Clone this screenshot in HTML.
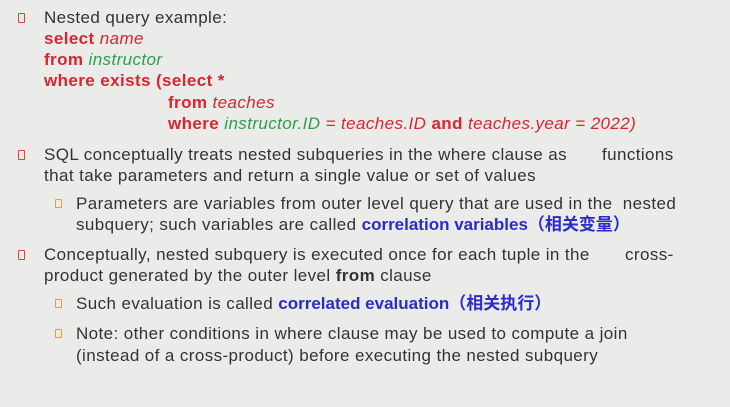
<!DOCTYPE html>
<html><head><meta charset="utf-8"><style>
body{margin:0;width:730px;height:407px;background:#ebebea;overflow:hidden;font-family:"Liberation Sans","Noto Sans CJK SC",sans-serif;font-size:17px;letter-spacing:0.4px;color:#333}
.l{position:absolute;white-space:nowrap;line-height:20px}
.r{color:#d9252f}.b{font-weight:bold}.i{font-style:italic}.g{color:#2f9e4c}.bl{color:#2b2bc8;font-weight:bold;letter-spacing:0}
.bu{position:absolute;width:5px;height:8px;border:1.5px solid #d9452f;border-radius:1px}
.sb{position:absolute;width:5px;height:7px;border:1.5px solid #e0a040;border-radius:1px}
</style></head><body>
<div class="bu" style="left:18px;top:13px"></div>
<div class="l" style="left:44px;top:8px">Nested query example:</div>
<div class="l r" style="left:44px;top:29px"><span class="b">select</span> <span class="i">name</span></div>
<div class="l r" style="left:44px;top:50px"><span class="b">from</span> <span class="i g">instructor</span></div>
<div class="l r b" style="left:44px;top:71px">where exists (select *</div>
<div class="l r" style="left:168px;top:93px"><span class="b">from</span> <span class="i">teaches</span></div>
<div class="l r" style="left:168px;top:114px"><span class="b">where</span> <span class="i g">instructor.ID</span><span class="i"> = teaches.ID </span><span class="b">and</span><span class="i"> teaches.year = 2022)</span></div>
<div class="bu" style="left:18px;top:150px"></div>
<div class="l" style="left:44px;top:145px">SQL conceptually treats nested subqueries in the where clause as</div>
<div class="l" style="left:602px;top:145px">functions</div>
<div class="l" style="left:44px;top:166px">that take parameters and return a single value or set of values</div>
<div class="sb" style="left:55px;top:199px"></div>
<div class="l" style="left:76px;top:194px">Parameters are variables from outer level query that are used in the&nbsp; nested</div>
<div class="l" style="left:76px;top:215px">subquery; such variables are called <span class="bl">correlation variables（相关变量）</span></div>
<div class="bu" style="left:18px;top:250px"></div>
<div class="l" style="left:44px;top:245px">Conceptually, nested subquery is executed once for each tuple in the</div>
<div class="l" style="left:625px;top:245px">cross-</div>
<div class="l" style="left:44px;top:266px">product generated by the outer level <b>from</b> clause</div>
<div class="sb" style="left:55px;top:299px"></div>
<div class="l" style="left:76px;top:294px">Such evaluation is called <span class="bl">correlated evaluation（相关执行）</span></div>
<div class="sb" style="left:55px;top:329px"></div>
<div class="l" style="left:76px;top:324px">Note: other conditions in where clause may be used to compute a join</div>
<div class="l" style="left:76px;top:346px">(instead of a cross-product) before executing the nested subquery</div>
</body></html>
